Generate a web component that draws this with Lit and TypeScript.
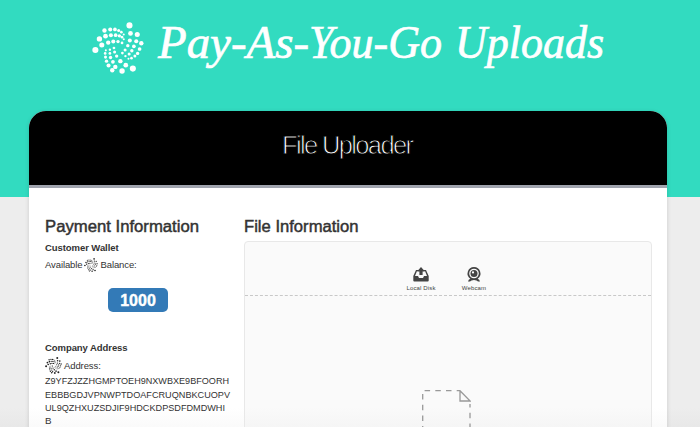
import { LitElement, html, css, svg } from "lit";
import { customElement } from "lit/decorators.js";

// Dots of the token mark: x, y, radius
const DOTS = [
  [131, 30, 9], [134, 54, 7], [154, 57, 7.5], [132, 75, 6], [151, 77, 6], [166, 83, 6.5],
  [30, 103, 9], [42, 70, 8], [57, 45, 6.5], [74, 42, 6], [88, 42, 5.5], [99, 45, 4.5], [107, 50, 4], [114, 57, 3],
  [49, 88, 7.5], [60, 62, 7], [76, 59, 6], [90, 59, 5.5], [101, 61, 5], [109, 65, 4], [114, 71, 3],
  [68, 81, 6.5], [83, 78, 6], [97, 78, 5], [109, 82, 4],
  [126, 90, 5], [144, 92, 5.5], [161, 100, 5.5],
  [118, 103, 4.5], [138, 105, 5], [155, 113, 5],
  [110, 112, 4], [130, 115, 4.5], [147, 121, 4.5],
  [119, 121, 3.5], [137, 127, 4], [128, 129, 3],
  [61, 104, 3], [73, 102, 3.5], [85, 97, 4],
  [59, 113, 4], [73, 113, 4], [87, 109, 4.5],
  [60, 124, 4.5], [75, 125, 5], [93, 121, 5],
  [63, 136, 5], [82, 138, 5.5], [104, 136, 6.5],
  [69, 149, 6], [89, 153, 6.5], [120, 148, 7],
  [80, 163, 6.5], [109, 165, 8], [141, 158, 9],
];

@customElement("token-mark")
export class TokenMark extends LitElement {
  static styles = css`
    :host { display: inline-block; flex: none; }
    svg { display: block; width: 100%; height: 100%; fill: currentColor; }
  `;
  render() {
    return html`<svg viewBox="20 20 154 154">
      ${DOTS.map(([x, y, r]) => svg`<circle cx=${x} cy=${y} r=${r}></circle>`)}
    </svg>`;
  }
}

@customElement("app-root")
export class AppRoot extends LitElement {
  static styles = css`
    :host {
      display: block;
      height: 427px;
      overflow: hidden;
      background: linear-gradient(#32dbc0 197px, #ededed 197px, #ededed 408px, #e8e8e8 427px);
      font-family: "Liberation Sans", Arial, sans-serif;
      font-size: 10px;
      color: #333;
    }
    * { box-sizing: border-box; }
    .banner { height: 111px; padding: 22px 0 0 91.5px; display: flex; align-items: flex-start; color: #fff; }
    .banner token-mark { width: 52px; height: 52px; }
    .title { display: block; width: 462px; height: 80px; margin: -12px 0 0 8.5px; fill: #fff; stroke: #fff; stroke-width: 0.7;
      font: italic 46px "Liberation Serif", serif; }
    .card { width: 638px; height: 330px; margin-left: 29px; border-radius: 17px 17px 0 0;
      background: linear-gradient(#fff 297px, #fafafa 316px);
      box-shadow: 0 1px 4px rgba(0, 0, 0, 0.15); }
    .head { height: 77px; background: #000; border-bottom: 3px solid #a0a4ae; border-radius: 17px 17px 0 0; }
    .head svg { display: block; width: 100%; height: 74px; fill: #fff; stroke: #000; stroke-width: 0.9; font-size: 25.5px; }
    .body { display: flex; padding: 28px 15px 0 16px; }
    .pay { width: 199px; }
    .files { flex: 1; }
    h2 { margin: 0; font-size: 16px; line-height: 20px; font-weight: 500; height: 20px; }
    h2 svg { display: block; width: 160px; height: 24px; fill: #333; stroke: #333; stroke-width: 0.45; overflow: visible; }
    h3 { margin: 5px 0 0; font-size: 9.5px; line-height: 13px; letter-spacing: -0.07px; }
    .row { display: flex; align-items: center; height: 14px; margin-top: 3.5px; font-size: 9.5px; letter-spacing: -0.1px; }
    .row token-mark { width: 14px; height: 14px; margin: 0 2px; color: #222; }
    .badge { width: 60px; height: 24px; margin: 16.5px 0 0 63px; border-radius: 5px; background: #337ab7; color: #fff;
      font-weight: 700; font-size: 16px; line-height: 25px; text-align: center; -webkit-text-stroke: 0.4px #fff; }
    .company { margin-top: 29px; }
    .addr { height: 17px; margin-top: 2.5px; }
    .addr token-mark { width: 17px; height: 17px; margin: 0 2px 0 0; }
    .hash { display: block; width: 192px; height: 56px; fill: #333; font-size: 9.8px; overflow: visible; }
    .drop { height: 300px; margin-top: 5px; border: 1px solid #e8e8e8; border-radius: 4px;
      background: linear-gradient(#fafafa 165px, #f5f5f5 186px); }
    .sources { height: 54px; padding: 24px 1px 0 0; border-bottom: 1px dashed #c8c8c8; display: flex; justify-content: center; }
    .source { width: 53px; display: flex; flex-direction: column; align-items: center; font-size: 6px; line-height: 8px;
      letter-spacing: 0.14px; color: #444; margin-top: 1px; }
    .source svg { width: 16px; height: 15px; margin-bottom: 2px; fill: #444; }
    .page { display: block; width: 49px; height: 60px; margin: 94px auto 0 177px; fill: none; stroke: #999; stroke-width: 1.3; }
  `;

  render() {
    return html`
      <header class="banner">
        <token-mark></token-mark>
        <svg class="title" viewBox="0 0 462 80">
          <text x="6" y="47.5" textLength="151" lengthAdjust="spacingAndGlyphs">Pay-As-</text>
          <text x="157" y="47.5" textLength="133" lengthAdjust="spacingAndGlyphs">You-Go</text>
          <text x="303" y="47.5" textLength="149" lengthAdjust="spacingAndGlyphs">Uploads</text>
        </svg>
      </header>
      <main class="card">
        <div class="head">
          <svg viewBox="0 0 638 74"><text x="253" y="43" textLength="132" lengthAdjust="spacing">File Uploader</text></svg>
        </div>
        <div class="body">
          <section class="pay">
            <h2><svg><text x="0" y="16" textLength="154" lengthAdjust="spacingAndGlyphs">Payment Information</text></svg></h2>
            <h3>Customer Wallet</h3>
            <div class="row">Available <token-mark></token-mark> Balance:</div>
            <div class="badge">1000</div>
            <h3 class="company">Company Address</h3>
            <div class="row addr"><token-mark></token-mark> Address:</div>
            <svg class="hash">
              <text x="0" y="10.4" textLength="184" lengthAdjust="spacingAndGlyphs">Z9YFZJZZHGMPTOEH9NXWBXE9BFOORH</text>
              <text x="0" y="23.7" textLength="185" lengthAdjust="spacingAndGlyphs">EBBBGDJVPNWPTDOAFCRUQNBKCUOPV</text>
              <text x="0" y="37" textLength="180" lengthAdjust="spacingAndGlyphs">UL9QZHXUZSDJIF9HDCKDPSDFDMDWHI</text>
              <text x="0" y="50.3">B</text>
            </svg>
          </section>
          <section class="files">
            <h2><svg><text x="0" y="16" textLength="114.5" lengthAdjust="spacingAndGlyphs">File Information</text></svg></h2>
            <div class="drop">
              <div class="sources">
                <div class="source">
                  <svg viewBox="0 0 16 15"><path d="M3 3H6L5 4H4L2 9H5L6 11H10L11 9H14L12 4H11L10 3H13L15.7 9V13.5Q15.7 14.5 14.7 14.5H1.3Q.3 14.5 .3 13.5V9ZM8 0L12 4.5H9.6V8H6.4V4.5H4Z"/></svg>
                  Local Disk
                </div>
                <div class="source">
                  <svg viewBox="0 0 16 15"><path fill-rule="evenodd" d="M8 0A6.5 6.5 0 0 1 11.7 11.8Q13.5 12.6 14 14.5H12Q11 13 8 13T4 14.5H2Q2.5 12.6 4.3 11.8A6.5 6.5 0 0 1 8 0ZM8 1.7A4.8 4.8 0 1 0 8 11.3A4.8 4.8 0 1 0 8 1.7Z"/><circle cx="8" cy="6.5" r="3.5"/><circle cx="7" cy="5.4" r="1.1" fill="#fff"/></svg>
                  Webcam
                </div>
              </div>
              <svg class="page" viewBox="0 0 49 60">
                <path d="M.7 60V.7H38" stroke-dasharray="5.5 5.2" stroke-dashoffset="3"/>
                <path d="M48 14V60" stroke-dasharray="5.5 5.2" stroke-dashoffset="2"/>
                <path d="M38 .7V11H48.2Z"/>
              </svg>
            </div>
          </section>
        </div>
      </main>
    `;
  }
}
